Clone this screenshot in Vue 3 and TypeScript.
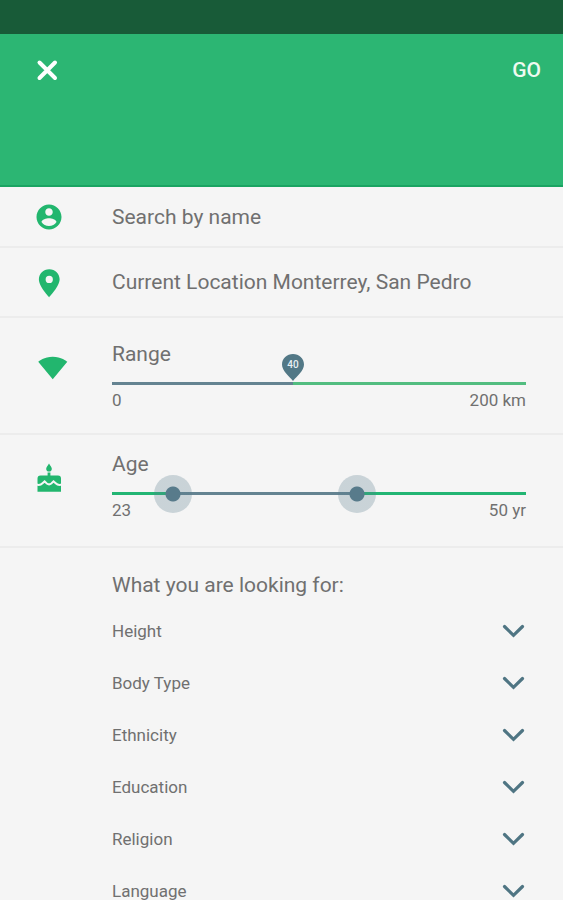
<script setup lang="ts">
import { computed, ref } from 'vue'

const name = ref('')
const place = ref('Current Location Monterrey, San Pedro')

// The distance scale is finer near zero, so the slider holds a position.
const maxKm = 200
const rangePos = ref(437)
const rangePercent = computed(() => rangePos.value / 10)
const rangeKm = computed(() => Math.round(maxKm * Math.pow(rangePos.value / 1000, 1.94)))

const minAge = 23
const maxAge = 50
const ageFrom = ref(27)
const ageTo = ref(39)
const agePercent = (age: number): number => ((age - minAge) / (maxAge - minAge)) * 100
const ageFill = computed(() => ({
  left: agePercent(ageFrom.value) + '%',
  width: agePercent(ageTo.value) - agePercent(ageFrom.value) + '%',
}))

const criteria: string[] = ['Height', 'Body Type', 'Ethnicity', 'Education', 'Religion', 'Language']
</script>

<template>
  <div class="page">
    <div class="status"></div>
    <header class="header">
      <button class="close" type="button" aria-label="Close">
        <svg width="22" height="22" viewBox="0 0 22 22">
          <path d="M3.500 3.500L19 19M19 3.500L3.500 19" fill="none" stroke="#fff" stroke-width="4" stroke-linecap="round" />
        </svg>
      </button>
      <button class="go" type="submit" form="filters">GO</button>
    </header>

    <form id="filters" @submit.prevent>
      <div class="row name-row">
        <svg class="icon" viewBox="0 0 24 24">
          <path d="M12 2C6.480 2 2 6.480 2 12s4.480 10 10 10 10-4.480 10-10S17.520 2 12 2zm0 3c1.660 0 3 1.340 3 3s-1.340 3-3 3-3-1.340-3-3 1.340-3 3-3zm0 14.200c-2.500 0-4.710-1.280-6-3.220.030-1.990 4-3.080 6-3.080 1.990 0 5.970 1.090 6 3.080-1.290 1.940-3.500 3.220-6 3.220z" />
        </svg>
        <input v-model="name" class="field" type="text" placeholder="Search by name" aria-label="Search by name" />
      </div>

      <div class="row place-row">
        <svg class="icon" viewBox="0 0 24 24">
          <path d="M12.200 1.700C7.400 1.700 3.900 5.300 3.900 9.900c0 5.700 8.300 14.200 8.300 14.200s8.300-8.500 8.300-14.200C20.500 5.300 17 1.700 12.200 1.700zm0 11.100a2.900 2.900 0 1 1 0-5.800 2.900 2.900 0 0 1 0 5.800z" />
        </svg>
        <input v-model="place" class="field" type="text" aria-label="Location" />
      </div>

      <div class="row range-row">
        <svg class="icon" viewBox="-3 0 24 24">
          <path d="M12.010 21L23.640 7c-.450-.340-4.930-4-11.640-4C5.280 3 .810 6.660.360 7l11.630 14 .010.010.010-.010z" />
        </svg>
        <div class="control">
          <label class="label" for="range">Range</label>
          <div class="track">
            <div class="fill" :style="{ left: '0%', width: rangePercent + '%' }"></div>
            <div class="pin" :style="{ left: rangePercent + '%' }">
              <svg class="pin-shape" viewBox="0 0 22 27">
                <path d="M11 0C5 0 0 4.600 0 10.500C0 17 7 22 11 27C15 22 22 17 22 10.500C22 4.600 17 0 11 0z" />
              </svg>
              <span class="pin-text">{{ rangeKm }}</span>
            </div>
            <input id="range" v-model.number="rangePos" class="slider bare" type="range" min="0" max="1000" />
          </div>
          <div class="ends"><span>0</span><span>200 km</span></div>
        </div>
      </div>

      <div class="row age-row">
        <svg class="icon" viewBox="0 0 30 30">
          <path d="M15 0.500C16.500 3 17.800 4.200 17.800 5.800a2.800 2.800 0 0 1-5.600 0C12.200 4.200 13.500 3 15 0.500z" />
          <path d="M13.600 9.500h2.800v3h7.600a3 3 0 0 1 3 3v13.300H3.500V15.500a3 3 0 0 1 3-3h7.100z" />
          <path class="icing" d="M2.500 21.500C5 22.300 7 21.800 8.500 20.300L10.600 18.400L12.800 20.500Q15.100 22.300 17.300 20.500L19.500 18.400L21.700 20.300C23.200 21.800 25.500 22.300 28 21.500" />
        </svg>
        <div class="control">
          <label class="label" for="age-from">Age</label>
          <div class="track">
            <div class="fill" :style="ageFill"></div>
            <input id="age-from" v-model.number="ageFrom" class="slider" type="range" :min="minAge" :max="maxAge" />
            <input v-model.number="ageTo" class="slider" type="range" :min="minAge" :max="maxAge" aria-label="Maximum age" />
          </div>
          <div class="ends"><span>23</span><span>50 yr</span></div>
        </div>
      </div>

      <section class="looking">
        <h2 class="label">What you are looking for:</h2>
        <ul class="list">
          <li v-for="item in criteria" :key="item">
            <button class="item" type="button">
              <span>{{ item }}</span>
              <svg width="24" height="14" viewBox="0 0 24 14">
                <path d="M2.500 2.500L11.500 11.300L20.500 2.500" fill="none" stroke="#4f7583" stroke-width="3.200" stroke-linecap="round" />
              </svg>
            </button>
          </li>
        </ul>
      </section>
    </form>
  </div>
</template>

<style>
body {
  background: #f5f5f5;
}

html {
  scrollbar-width: none;
}
</style>

<style scoped>
.page {
  font-family: Roboto, "Liberation Sans", sans-serif;
  color: #707070;
  background: #f5f5f5;
}

button,
input {
  margin: 0;
  padding: 0;
  border: 0;
  background: none;
  font-family: inherit;
  color: inherit;
}

button {
  cursor: pointer;
}

.status {
  height: 34px;
  background: #185b38;
}

.header {
  display: flex;
  align-items: flex-start;
  justify-content: space-between;
  box-sizing: border-box;
  height: 153px;
  padding: 23px 22px 0 36px;
  background: #2cb673;
  border-bottom: 2px solid #1aa462;
}

.close {
  display: flex;
  padding: 2px 0;
}

.go {
  font-size: 21px;
  font-weight: 500;
  line-height: 26px;
  color: #effaf0;
}

.row {
  display: flex;
  box-sizing: border-box;
  padding-right: 37px;
  border-bottom: 2px solid #ececec;
}

.icon {
  flex: none;
  width: 30px;
  height: 30px;
  margin: 0 48px 0 34px;
  overflow: visible;
  fill: #22b66e;
}

.name-row,
.place-row {
  align-items: center;
}

.name-row {
  height: 61px;
}

.place-row {
  height: 70px;
}

.field {
  flex: 1;
  min-width: 0;
  font-size: 21px;
  line-height: 26px;
  outline: 0;
}

.field::placeholder {
  color: inherit;
  opacity: 1;
}

.control {
  flex: 1;
  min-width: 0;
}

.range-row {
  padding-top: 23px;
  padding-bottom: 23px;
}

.age-row {
  padding-top: 16px;
  padding-bottom: 26px;
}

.range-row .icon,
.age-row .icon {
  margin-top: 12px;
}

.icing {
  fill: none;
  stroke: #f5f5f5;
  stroke-width: 2;
}

.label {
  display: block;
  margin: 0;
  font-size: 21px;
  font-weight: 400;
  line-height: 26px;
}

.track {
  position: relative;
  height: 3px;
  margin: 15px 0 5px;
  background: #22b573;
}

.range-row .track {
  background: #52bd80;
}

.fill {
  position: absolute;
  top: 0;
  height: 3px;
  background: #648391;
}

.pin {
  position: absolute;
  bottom: 4px;
  width: 22px;
  height: 27px;
  margin-left: -11px;
}

.pin-shape {
  display: block;
  width: 22px;
  height: 27px;
  fill: #527886;
}

.pin-text {
  position: absolute;
  top: 5px;
  left: 0;
  width: 22px;
  font-size: 10px;
  font-weight: 500;
  line-height: 12px;
  text-align: center;
  color: #e8f0f4;
}

/* Widened by half a thumb on each side, so thumb centres reach both track ends. */
.slider {
  position: absolute;
  top: -17px;
  left: -19px;
  width: calc(100% + 38px);
  height: 38px;
  appearance: none;
  pointer-events: none;
}

.slider::-webkit-slider-thumb {
  appearance: none;
  width: 38px;
  height: 38px;
  border-radius: 50%;
  background: radial-gradient(circle, #587b8b 7px, rgba(88, 123, 139, 0.28) 8px);
  pointer-events: auto;
  cursor: pointer;
}

.bare {
  opacity: 0;
}

.bare::-webkit-slider-thumb {
  background: none;
}

.ends {
  display: flex;
  justify-content: space-between;
  font-size: 17px;
  line-height: 20px;
}

.looking {
  padding: 24px 37px 0 112px;
}

.list {
  margin: 7px 0 0;
  padding: 0;
  list-style: none;
}

.item {
  display: flex;
  align-items: center;
  justify-content: space-between;
  width: 100%;
  height: 52px;
  font-size: 17px;
  line-height: 20px;
}
</style>
